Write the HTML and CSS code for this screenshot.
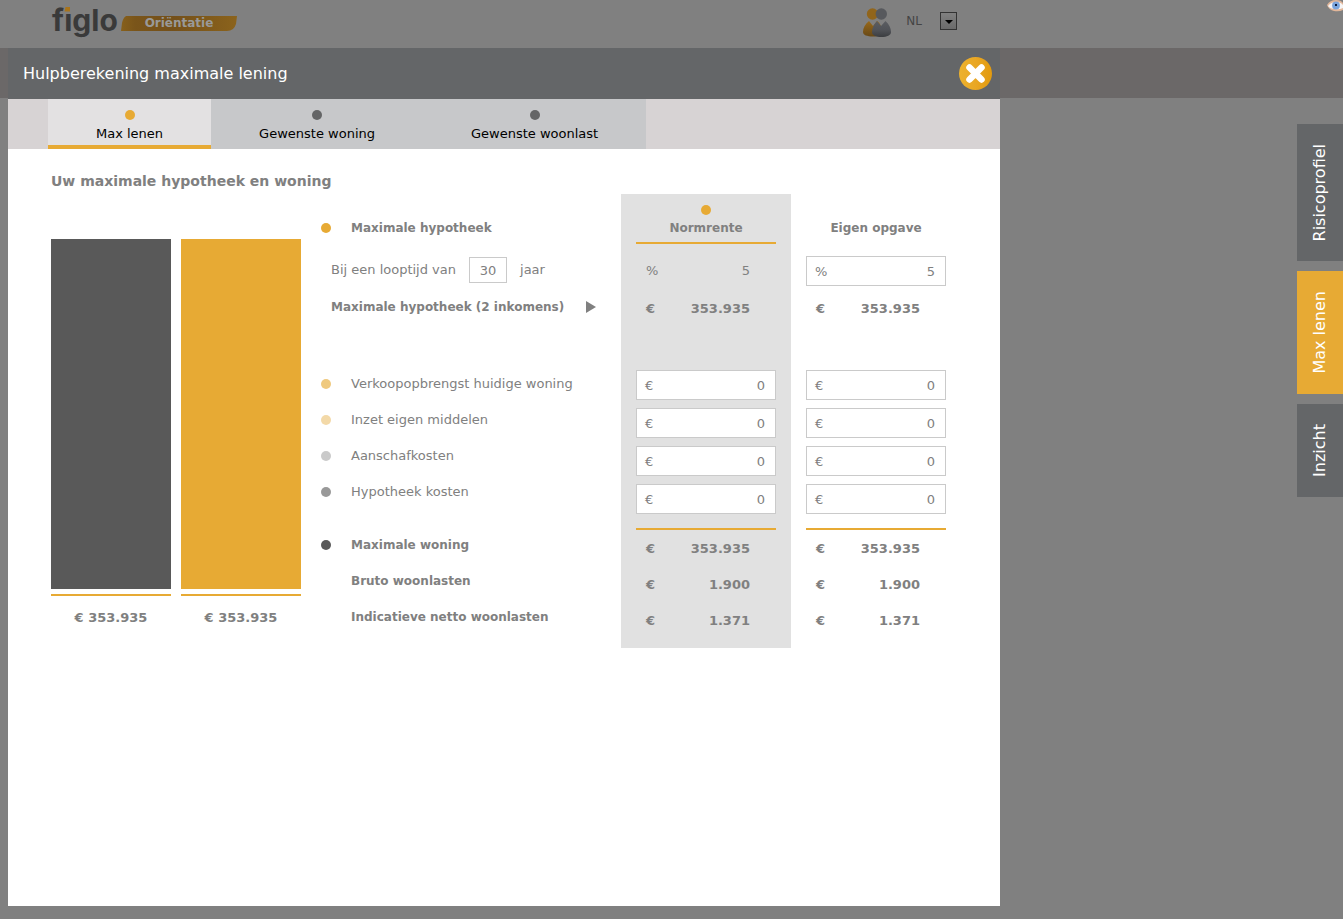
FILE: index.html
```html
<!DOCTYPE html>
<html lang="nl">
<head>
<meta charset="utf-8">
<meta name="viewport" content="width=device-width, initial-scale=1">
<title>Hulpberekening maximale lening</title>
<link rel="stylesheet" href="styles.css">
</head>
<body>
<header class="site-header">
  <div class="site-header-inner">
    <div class="brand">
      <svg class="logo" viewBox="0 0 66 44" width="66" height="44" role="img" aria-label="figlo">
        <text class="logo-text" x="1" y="31">fıglo</text>
        <path d="M14.500 7H19V11.500H13.500Z" fill="#a8741c"/>
      </svg>
      <div class="badge">
        <svg class="badge-shape" viewBox="0 0 116 15" preserveAspectRatio="none" aria-hidden="true">
          <defs>
            <linearGradient id="badgeFill" x1="0" x2="1" y1="0" y2="0">
              <stop offset="0" stop-color="#87601b"/><stop offset=".12" stop-color="#7a551a"/><stop offset=".45" stop-color="#74501a"/><stop offset="1" stop-color="#8b631c"/>
            </linearGradient>
          </defs>
          <path d="M5 0H116L115 8Q113 15 106 15H0L1 7Q2 2 5 0Z" fill="url(#badgeFill)"/>
        </svg>
        <span class="badge-text">Oriëntatie</span>
      </div>
    </div>
    <div class="account">
      <svg class="users" viewBox="0 0 30 30" width="30" height="30" aria-hidden="true">
        <defs>
          <linearGradient id="gold" x1="0" x2="0" y1="0" y2="1"><stop offset="0" stop-color="#98691a"/><stop offset="1" stop-color="#684917"/></linearGradient>
          <linearGradient id="steel" x1="0" x2="0" y1="0" y2="1"><stop offset="0" stop-color="#5b5d61"/><stop offset=".55" stop-color="#515358"/><stop offset="1" stop-color="#3b3d40"/></linearGradient>
        </defs>
        <path d="M7 13C3 16 1 20 1 24C1 27 5 28.500 11 28.500C17 28.500 20 27 20 24C20 19 18 15 15 13L11 18Z" fill="url(#gold)"/>
        <circle cx="10.500" cy="6" r="5.700" fill="#91651b"/>
        <path d="M15 13C12 16 10 20 10 24C10 27.500 14 29 19.500 29C25 29 29 27.500 29 24C29 20 27 16 23.500 13L19 18Z" fill="url(#steel)"/>
        <circle cx="19.300" cy="6" r="5.700" fill="#57595d"/>
      </svg>
      <label class="lang-label" for="lang">NL</label>
      <span class="lang-picker">
        <select id="lang" class="lang-select"><option label=" "></option></select>
        <svg class="lang-arrow" viewBox="0 0 8 4" width="8" height="4" aria-hidden="true"><path d="M0 0H8L4 4Z" fill="#000"/></svg>
      </span>
    </div>
  </div>
  <svg class="eye" viewBox="0 0 16 12" width="16" height="12" aria-hidden="true">
    <path d="M0 5Q3 0 9 0Q14 0 16 3V10Q12 12 7 11Q2 10 0 5Z" fill="#e2b699"/>
    <path d="M1 6Q4 2 9 2Q14 2 16 5V8Q12 10 8 9Q3 9 1 6Z" fill="#f6f4f4"/>
    <circle cx="9" cy="5.500" r="3.900" fill="#7ba4dc"/>
    <rect x="8" y="4" width="2" height="2" fill="#0b1a3c"/>
  </svg>
</header>
<div class="page-band"></div>

<main class="dialog" role="dialog" aria-labelledby="dialog-title">
  <div class="dialog-head">
    <h1 class="dialog-title" id="dialog-title">Hulpberekening maximale lening</h1>
    <button class="close" type="button" aria-label="Sluiten">
      <svg viewBox="0 0 33 33" width="33" height="33" aria-hidden="true">
        <defs><linearGradient id="closeFill"><stop offset="0" stop-color="#edb22d"/><stop offset=".5" stop-color="#e9a725"/><stop offset="1" stop-color="#e29a0d"/></linearGradient></defs>
        <circle cx="16.500" cy="16.500" r="16.500" fill="url(#closeFill)"/>
        <path d="M10.500 10.500L22.500 22.500M22.500 10.500L10.500 22.500" stroke="#fff" stroke-width="6.500" stroke-linecap="round"/>
      </svg>
    </button>
  </div>
  <nav class="tabs" aria-label="Berekening">
    <button class="tab tab-active" type="button"><span class="dot orange"></span>Max lenen</button>
    <button class="tab" type="button"><span class="dot slate"></span>Gewenste woning</button>
    <button class="tab" type="button"><span class="dot slate"></span>Gewenste woonlast</button>
  </nav>

  <section class="content">
    <h2 class="content-title">Uw maximale hypotheek en woning</h2>
    <div class="calc">
      <div class="chart">
        <div class="bar-group"><div class="bar charcoal"></div><div class="bar-value">€ 353.935</div></div>
        <div class="bar-group"><div class="bar orange"></div><div class="bar-value">€ 353.935</div></div>
      </div>

      <div class="labels">
        <div class="label-row strong"><span class="dot orange"></span>Maximale hypotheek</div>
        <div class="label-row term"><label for="term">Bij een looptijd van</label><input class="term-input" id="term" type="text" value="30"><span>jaar</span></div>
        <div class="label-row strong incomes"><span>Maximale hypotheek (2 inkomens)</span>
          <button class="expand" type="button" aria-label="Toon details"><svg viewBox="0 0 10 12" width="10" height="12" aria-hidden="true"><path d="M0 0L10 6L0 12Z" fill="#808080"/></svg></button>
        </div>
        <div class="label-group costs">
          <div class="label-row"><span class="dot gold-mid"></span>Verkoopopbrengst huidige woning</div>
          <div class="label-row"><span class="dot gold-light"></span>Inzet eigen middelen</div>
          <div class="label-row"><span class="dot gray-light"></span>Aanschafkosten</div>
          <div class="label-row"><span class="dot gray-mid"></span>Hypotheek kosten</div>
        </div>
        <div class="label-group totals-labels">
          <div class="label-row strong"><span class="dot charcoal"></span>Maximale woning</div>
          <div class="label-row strong"><span class="dot"></span>Bruto woonlasten</div>
          <div class="label-row strong"><span class="dot"></span>Indicatieve netto woonlasten</div>
        </div>
      </div>

      <div class="column column-selected">
        <div class="column-head"><span class="dot orange"></span>Normrente</div>
        <div class="amount rate"><span>%</span><span>5</span></div>
        <div class="amount strong"><span>€</span><span>353.935</span></div>
        <div class="fields">
          <label class="field"><span>€</span><input type="text" value="0" aria-label="Verkoopopbrengst huidige woning, normrente"></label>
          <label class="field"><span>€</span><input type="text" value="0" aria-label="Inzet eigen middelen, normrente"></label>
          <label class="field"><span>€</span><input type="text" value="0" aria-label="Aanschafkosten, normrente"></label>
          <label class="field"><span>€</span><input type="text" value="0" aria-label="Hypotheek kosten, normrente"></label>
        </div>
        <div class="totals">
          <div class="amount strong"><span>€</span><span>353.935</span></div>
          <div class="amount strong"><span>€</span><span>1.900</span></div>
          <div class="amount strong"><span>€</span><span>1.371</span></div>
        </div>
      </div>

      <div class="column">
        <div class="column-head"><span class="dot"></span>Eigen opgave</div>
        <div class="rate rate-field"><label class="field"><span>%</span><input type="text" value="5" aria-label="Rente, eigen opgave"></label></div>
        <div class="amount strong"><span>€</span><span>353.935</span></div>
        <div class="fields">
          <label class="field"><span>€</span><input type="text" value="0" aria-label="Verkoopopbrengst huidige woning, eigen opgave"></label>
          <label class="field"><span>€</span><input type="text" value="0" aria-label="Inzet eigen middelen, eigen opgave"></label>
          <label class="field"><span>€</span><input type="text" value="0" aria-label="Aanschafkosten, eigen opgave"></label>
          <label class="field"><span>€</span><input type="text" value="0" aria-label="Hypotheek kosten, eigen opgave"></label>
        </div>
        <div class="totals">
          <div class="amount strong"><span>€</span><span>353.935</span></div>
          <div class="amount strong"><span>€</span><span>1.900</span></div>
          <div class="amount strong"><span>€</span><span>1.371</span></div>
        </div>
      </div>
    </div>
  </section>
</main>

<nav class="side-tabs" aria-label="Onderdelen">
  <button class="side-tab" type="button"><span>Risicoprofiel</span></button>
  <button class="side-tab side-tab-active" type="button"><span>Max lenen</span></button>
  <button class="side-tab" type="button"><span>Inzicht</span></button>
</nav>
</body>
</html>
```
FILE: styles.css
```css
* { box-sizing: border-box; }

body {
  margin: 0;
  min-height: 100vh;
  background: #808080;
  color: #808080;
  font: 13px/20px Verdana, "DejaVu Sans", sans-serif;
}

button, input, select { font: inherit; color: inherit; margin: 0; }
button { border: 0; padding: 0; background: none; cursor: pointer; }

.strong { font-weight: bold; font-size: 12px; }

.dot { display: block; flex: none; width: 10px; height: 10px; border-radius: 50%; }
.orange { background: #e7aa34; }
.slate { background: #646566; }
.charcoal { background: #595959; }
.gold-mid { background: #efc97e; }
.gold-light { background: #f3d9a8; }
.gray-light { background: #cacaca; }
.gray-mid { background: #999; }

/* Page behind the dialog */
.site-header { position: relative; height: 48px; }
.site-header-inner {
  display: flex;
  justify-content: space-between;
  max-width: 1000px;
  padding: 0 43px 0 51px;
}
.brand { display: flex; gap: 4px; }
.logo { overflow: visible; }
.logo-text { font: 700 30px Inter, sans-serif; fill: #3a3a3a; }
.badge { position: relative; width: 116px; height: 15px; margin-top: 16px; text-align: center; }
.badge-shape { position: absolute; inset: 0; width: 100%; height: 100%; }
.badge-text { position: relative; display: block; color: #999; font-size: 12px; font-weight: bold; line-height: 15px; }
.account { display: flex; align-items: center; height: 42px; }
.users { margin-top: 4px; overflow: visible; }
.lang-label { margin: 0 18px 0 14px; color: #444; font-size: 12px; }
.lang-picker { position: relative; display: flex; }
.lang-select {
  appearance: none;
  width: 17px;
  height: 18px;
  padding: 0;
  border: 1px solid #333;
  border-radius: 0;
  background: linear-gradient(#808080, #6b6b6b);
}
.lang-arrow { position: absolute; left: 5px; top: 8px; pointer-events: none; }
.eye { position: absolute; top: 0; right: 0; }
.page-band { height: 50px; background: #6b6868; }

/* Dialog */
.dialog {
  position: absolute;
  top: 48px;
  left: 8px;
  width: 992px;
  max-width: calc(100% - 16px);
  min-height: calc(100vh - 61px);
  background: #fff;
}
.dialog-head {
  display: flex;
  align-items: center;
  justify-content: space-between;
  height: 51px;
  padding: 0 8px 0 15px;
  background: #646668;
}
.dialog-title { margin: 0; color: #fff; font-size: 16px; font-weight: normal; }
.close { display: flex; }

.tabs { display: flex; height: 50px; padding-left: 40px; background: #d7d3d4; }
.tab {
  display: flex;
  flex-direction: column;
  align-items: center;
  gap: 4px;
  padding: 11px 48px 0;
  border-bottom: 4px solid #c7c8ca;
  background: #c7c8ca;
  color: #000;
}
.tab-active { border-color: #e7aa34; background: #e3e1e2; }

.content { padding: 22px 39px 22px 43px; }
.content-title { margin: 0 0 3px; font-size: 14px; line-height: 20px; }
.calc { display: flex; align-items: flex-start; }

.chart { display: flex; gap: 10px; width: 250px; padding-top: 45px; }
.bar-group { flex: 1; }
.bar { height: 350px; }
.bar-value {
  margin-top: 5px;
  padding-top: 12px;
  border-top: 2px solid #e7aa34;
  font-weight: bold;
  text-align: center;
}

.labels { flex: 1; padding: 16px 20px 0; }
.label-row { display: flex; align-items: center; gap: 20px; height: 36px; }
.term { gap: 0; margin: 6px 0 1px; padding-left: 10px; }
.term-input {
  width: 38px;
  height: 26px;
  margin: 0 13px;
  padding: 0;
  border: 1px solid #cacaca;
  text-align: center;
}
.incomes { justify-content: space-between; padding: 0 5px 0 10px; }
.expand { display: flex; }
.costs { margin-top: 41px; }
.totals-labels { margin-top: 17px; }

.column { width: 170px; padding: 0 15px 10px; }
.column-selected { background: #e1e1e1; }
.column-head {
  display: flex;
  flex-direction: column;
  align-items: center;
  gap: 3px;
  height: 50px;
  padding-top: 11px;
  border-bottom: 2px solid transparent;
  font-size: 12px;
  font-weight: bold;
}
.column-selected .column-head { border-color: #e7aa34; }
.amount { display: flex; align-items: center; justify-content: space-between; height: 36px; padding: 2px 26px 0 10px; }
.amount.strong { font-size: 13px; }
.amount.rate { padding-top: 0; }
.rate { height: 38px; margin-top: 8px; }
.rate-field { padding-top: 4px; }
.field {
  display: flex;
  align-items: center;
  height: 30px;
  padding: 2px 10px 0 8px;
  border: 1px solid #cacaca;
  background: #fff;
}
.field input {
  flex: 1;
  min-width: 0;
  padding: 0;
  border: 0;
  background: none;
  text-align: right;
}
.fields { display: grid; grid-template-columns: minmax(0, 1fr); gap: 8px; margin: 44px 0 14px; }
.totals { border-top: 2px solid #e7aa34; }

/* Tabs on the window edge */
.side-tabs { position: absolute; top: 124px; right: 0; display: grid; gap: 10px; }
.side-tab {
  display: flex;
  justify-content: center;
  width: 46px;
  padding: 20px 0;
  background: #646668;
  color: #fff;
  font-size: 16px;
}
.side-tab span { writing-mode: vertical-rl; transform: rotate(180deg); }
.side-tab-active { background: #e7aa34; }
```
